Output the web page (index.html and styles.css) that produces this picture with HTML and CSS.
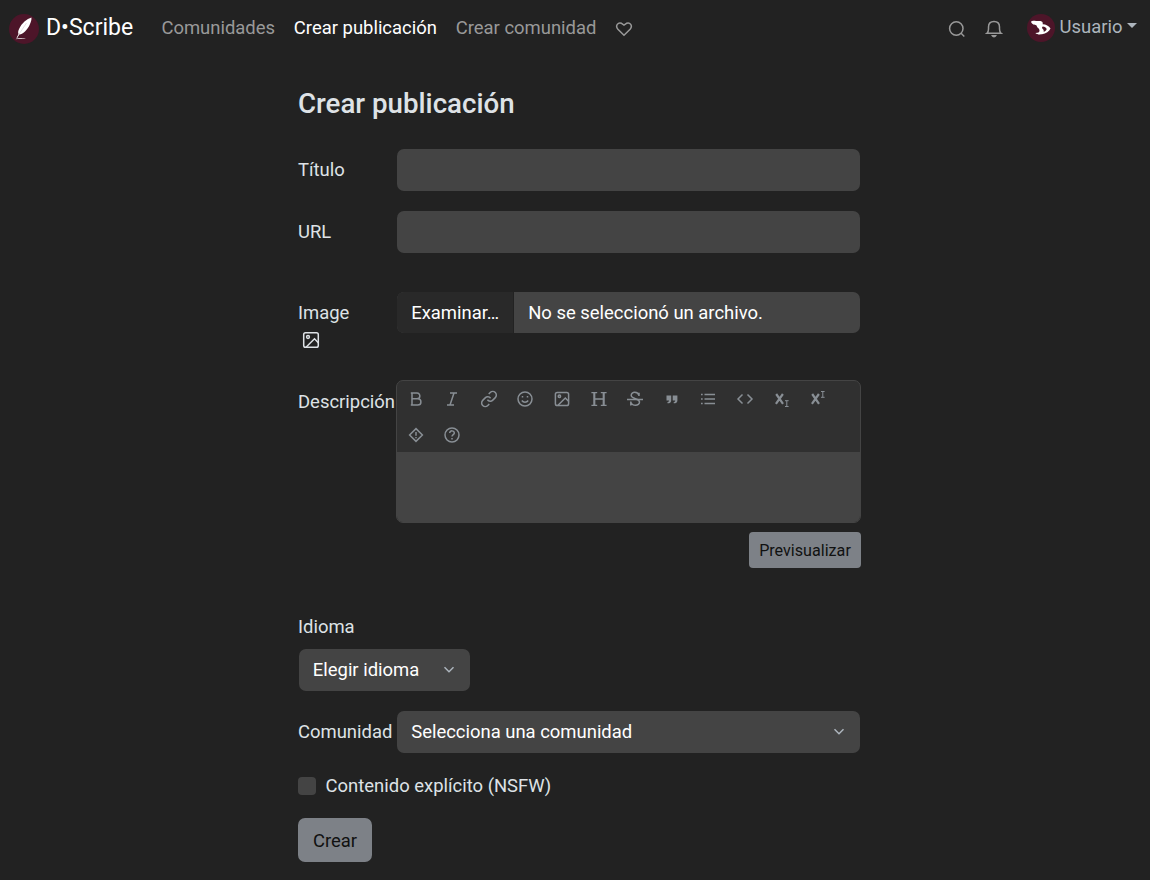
FILE: index.html
```html
<!DOCTYPE html>
<html lang="es">
<head>
<meta charset="utf-8">
<title>D•Scribe</title>
<link rel="stylesheet" href="styles.css">
</head>
<body>
<nav class="navbar">
  <a class="brand">
    <svg class="brand-logo" viewBox="0 0 30 30"><circle cx="15" cy="15" r="15" fill="#4d1529"/><path d="M22.400 3.500C18 4.800 12.500 9.500 10.300 14.500 9 17.200 8.900 18.800 9.500 20L7.400 24.200l.7.100 2.200-3.700C14.500 20 18.500 15.500 20.600 11 22 8 22.800 5.200 22.400 3.500Z" fill="#fff"/><path d="M9.800 20.500 17.500 9" stroke="#cbbcc2" stroke-width=".5"/><path d="M6.500 25.200c3-1.500 5-1.200 10.500-.5-4 .4-7 .1-10.500.5Z" fill="#cbbcc2"/></svg>
    <span>D•Scribe</span>
  </a>
  <div class="nav-links">
    <a>Comunidades</a><a class="active">Crear publicación</a><a>Crear comunidad</a>
    <svg class="heart" viewBox="0 0 18 18"><path d="M9 15.300 2.900 9.200C-.2 5.700 3.200 1.800 6.500 3.300L9 5l2.500-1.700c3.300-1.500 6.700 2.400 3.600 5.900Z"/></svg>
  </div>
  <div class="nav-right">
    <svg class="nav-icon" viewBox="0 0 18 18"><circle cx="8.300" cy="8.500" r="6.700"/><path d="m13.100 13.300 3.200 3.200"/></svg>
    <svg class="nav-icon bell" viewBox="0 0 18 18"><path d="M1.900 13.300h14.200c-1.400-1-1.600-1.800-1.600-4.300V7C14.500 3.600 12.300 1.400 9 1.400S3.500 3.600 3.500 7v2c0 2.500-.2 3.300-1.600 4.300Z"/><path d="M7.300 15.700c.7 1.400 2.700 1.400 3.400 0Z" fill="currentColor"/></svg>
    <a class="user">
      <svg class="avatar" viewBox="0 0 28 28"><circle cx="14" cy="14" r="14" fill="#4d1529"/><path fill-rule="evenodd" d="M4 7.800C5 6.500 7 6.700 9 6.900l4.500.2c1.800.3 2.500 1.500 2.200 3.200 3.200 0 6.300 1.700 7.800 4.200-1.200 3-4.500 5.200-8.500 5.800-2.600.4-5.300.1-6.600-1.300 2.900-.1 4-.9 4.100-2.300 0-1.300-.7-2.200-1.800-3-.8-.7-.7-1.800-1.500-2.400C7.800 10.500 5 11 4 7.800ZM15.800 12.600c-1 .8-.9 1.700-.1 2.400.9.800 1.300 1.500.9 2.800 1.500-.3 2.800-1.700 3.100-2.900-.7-1.300-2-2.200-3.900-2.300Z" fill="#fff"/></svg>
      <span>Usuario</span><i class="caret"></i>
    </a>
  </div>
</nav>

<main class="form">
  <h1>Crear publicación</h1>
  <div class="row"><label for="titulo">Título</label><input class="field" id="titulo" type="text"></div>
  <div class="row"><label for="url">URL</label><input class="field" id="url" type="text"></div>
  <div class="row image-row">
    <label>Image<svg class="image-icon" viewBox="0 0 18 18"><rect x="1.700" y="1.700" width="14.600" height="14.600" rx="1.800"/><circle cx="6" cy="6" r="1.400"/><path d="m4 16.300 8.500-8.500 4 4.200"/></svg></label>
    <div class="file"><span class="file-button">Examinar…</span><span class="file-name">No se seleccionó un archivo.</span></div>
  </div>
  <div class="description-row">
    <label>Descripción</label>
    <div class="editor">
      <div class="toolbar">
        <span><svg viewBox="0 0 18 18"><path d="M5 3v12h5.700c4.300 0 4.300-6.200 0-6.200H5h5c3.800 0 3.800-5.800 0-5.800ZM3.800 3h2M3.800 15h2"/></svg></span>
        <span><svg viewBox="0 0 18 18"><path d="M7 3h7M4 15h7M11 3 7 15"/></svg></span>
        <span><svg viewBox="0 0 18 18"><path d="M7.400 9.800a3.600 3.600 0 0 0 5.400.3l2.500-2.500a3.600 3.600 0 0 0-5.100-5.100L8.700 4M10.600 8.200a3.600 3.600 0 0 0-5.400-.3l-2.500 2.500a3.600 3.600 0 0 0 5.100 5.100L9.300 14"/></svg></span>
        <span><svg viewBox="0 0 18 18"><circle cx="9" cy="9" r="7"/><path d="M5.800 10.500c1.600 2.300 4.800 2.300 6.400 0M6.500 6v1.600M11.500 6v1.600"/></svg></span>
        <span><svg viewBox="0 0 18 18"><rect x="2.400" y="2.400" width="13.200" height="13.200" rx="1.800"/><circle cx="6.400" cy="6.300" r="1.200"/><path d="M4.500 15.800 12.300 8l3.500 3.500"/></svg></span>
        <span><svg viewBox="0 0 18 18"><path d="M1.400 2.700h5.800M10.800 2.700h5.800M1.400 15.300h5.800M10.800 15.300h5.800M4.500 9h9" stroke-width="1.300"/><path d="M4.300 2.700v12.600M13.700 2.700v12.600" stroke-width="2.100"/></svg></span>
        <span><svg viewBox="0 0 18 18"><path d="M13 6V2.800M13 5.500C12 1.300 5.200 1.300 5.200 5.300c0 4 8.300 2.800 8.300 6.600 0 4.500-7.500 4.200-8.700.2M4.800 11.500v4"/><path d="M1 9.500h16" stroke-width="1.700"/></svg></span>
        <span><svg viewBox="0 0 18 18"><path d="M3.500 5.500h4.700v5c0 1.500-.8 2.500-2.300 2.700H4.500V12c1 0 1.500-.6 1.500-1.500H3.500ZM9.700 5.500h4.700v5c0 1.500-.8 2.500-2.300 2.700h-1.400V12c1 0 1.500-.6 1.500-1.500H9.700Z" fill="currentColor" stroke="none"/></svg></span>
        <span><svg viewBox="0 0 18 18"><path d="M5.500 4.500H16M5.500 9H16M5.500 13.500H16M2 4.500h1.700M2 9h1.700M2 13.500h1.700" stroke-width="1.600"/></svg></span>
        <span><svg viewBox="0 0 18 18"><path d="M6.500 4.500 2 9l4.500 4.500M11.500 4.500 16 9l-4.500 4.500"/></svg></span>
        <span><svg viewBox="0 0 18 18"><path d="m3.200 4 6.800 9.800M9.900 4l-7 9.800" stroke-width="2.200"/><path d="M12 10.700h3.600M12 16.500h3.600M13.800 10.700v5.800" stroke-width="1"/></svg></span>
        <span><svg viewBox="0 0 18 18"><path d="m3.200 4 6.800 9.800M9.900 4l-7 9.800" stroke-width="2.200"/><path d="M12 1.500h3.600M12 7.300h3.600M13.800 1.500v5.800" stroke-width="1"/></svg></span>
        <span><svg viewBox="0 0 18 18"><path d="m9 2.600 6.400 6.400L9 15.400 2.600 9Z"/><path d="M9 6v3.700M9 11v1.300" stroke-width="1.500"/></svg></span>
        <span><svg viewBox="0 0 18 18"><circle cx="9" cy="9" r="7"/><path d="M6.700 7c.1-3 4.800-2.700 4.600.1-.1 1.500-2.300 1.500-2.300 3.300M9 12v1.400"/></svg></span>
      </div>
      <textarea class="editor-text" aria-label="Descripción"></textarea>
    </div>
  </div>
  <button class="preview">Previsualizar</button>
  <div class="language">
    <label>Idioma</label>
    <div class="select select-small"><span>Elegir idioma</span><svg viewBox="0 0 12 12"><path d="m1.500 3.300 4.500 4.500 4.500-4.500"/></svg></div>
  </div>
  <div class="row"><label>Comunidad</label><div class="select"><span>Selecciona una comunidad</span><svg viewBox="0 0 12 12"><path d="m1.500 3.300 4.500 4.500 4.500-4.500"/></svg></div></div>
  <label class="check"><input type="checkbox"><span>Contenido explícito (NSFW)</span></label>
  <button class="submit">Crear</button>
</main>
</body>
</html>
```

FILE: styles.css
```css
* { box-sizing: border-box; }
body {
  margin: 0;
  background: #222;
  color: #dee2e6;
  font: 18.45px/28px Roboto, "Liberation Sans", sans-serif;
}
svg {
  display: block;
  flex: none;
  fill: none;
  stroke: currentColor;
  stroke-width: 1.5;
  stroke-linecap: butt;
}
.brand-logo, .avatar { stroke: none; }
.navbar { display: flex; height: 56px; padding: 0 13px 0 9.4px; align-items: center; }
.brand { display: flex; align-items: center; gap: 6.6px; width: 152px; color: #fff; font-size: 23.06px; }
.brand-logo { width: 30px; height: 30px; margin-top: 1px; }
.brand span { margin-top: -1px; }
.nav-links { display: flex; align-items: center; gap: 18.8px; color: #999; }
.nav-links .active { color: #fff; }
.heart { width: 18px; height: 18px; margin: 2px 0 0 -.7px; }
.nav-right { display: flex; align-items: center; margin-left: auto; color: #999; }
.nav-icon { width: 18px; height: 18px; margin: 2px 19px 0 0; }
.bell { margin-right: 24px; }
.user { display: flex; align-items: center; margin-top: -2px; color: #adb5bd; }
.avatar { width: 28px; height: 28px; margin: 1px 4.7px 0 0; }
.caret { margin: -3px 0 0 4.5px; border: 5px solid transparent; border-top-color: currentColor; border-bottom: 0; }

.form { width: 563px; margin: 0 0 0 298px; padding-top: 31px; }
h1 { margin: 0 0 29px; font-size: 27.7px; line-height: 33px; font-weight: 500; }
.row { display: grid; grid-template-columns: 99px 463px; height: 42px; margin-bottom: 20px; align-items: center; }
.field { width: 100%; height: 42px; border: 0; border-radius: 7px; padding: 0 14px; background: #444; color: #fff; font: inherit; }
.image-row { height: 60px; margin: 39px 0 28px; align-items: start; }
.image-row label { padding-top: 7px; }
.image-icon { width: 18px; height: 18px; margin: 4px 0 0 4px; }
.file { display: flex; height: 41px; border-radius: 7px; overflow: hidden; background: #444; color: #fff; line-height: 42px; }
.file-button { width: 117px; padding-left: 14.2px; background: #292929; border-right: 1px solid #222; }
.file-name { padding-left: 14.2px; }
.description-row { display: grid; grid-template-columns: 98px 465px; }
.description-row label { padding-top: 8px; }
.editor { height: 143px; border: 1px solid #444; border-radius: 7px; overflow: hidden; background: #303030; }
.toolbar { display: flex; flex-wrap: wrap; height: 71px; padding-left: .3px; color: #888e94; }
.toolbar span { display: grid; place-items: center; width: 36.6px; height: 36px; }
.toolbar svg { width: 18px; height: 18px; }
.editor-text { display: block; width: 100%; height: 70px; border: 0; padding: 8px 14px; background: #444; color: #fff; font: inherit; resize: none; }
button { display: block; border: 0; padding: 0; background: #7d8187; color: #111; font: inherit; }
.preview { width: 112px; height: 36px; margin: 9px 0 0 auto; padding-top: 1px; border-radius: 4px; font-size: 16.14px; }
.language { margin-top: 45px; margin-bottom: 20px; }
.language label { display: block; margin-bottom: 8px; }
.select { display: flex; align-items: center; justify-content: space-between; height: 42px; border-radius: 7px; padding: 0 15px 0 14.2px; background: #444; color: #fff; }
.select svg { width: 12px; height: 12px; color: #adb5bd; }
.select-small { width: 171px; margin-left: 1px; padding-left: 13.8px; }
.check { display: flex; align-items: center; gap: 9.6px; height: 28px; margin-top: -1px; }
.check input { appearance: none; width: 18px; height: 18px; margin: 0; border-radius: 4px; background: #444; }
.submit { width: 74px; height: 44px; margin-top: 18px; padding-top: 1px; border-radius: 7px; }
```
